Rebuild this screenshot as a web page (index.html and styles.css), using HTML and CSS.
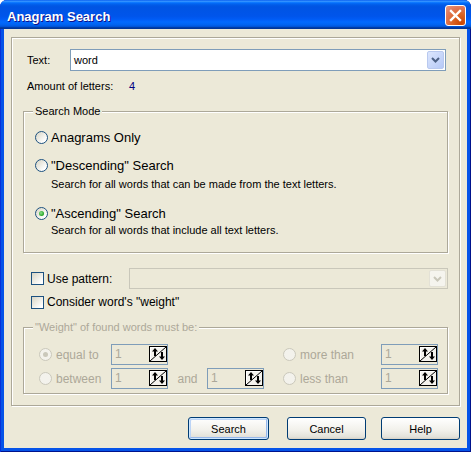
FILE: index.html
```html
<!DOCTYPE html>
<html lang="en">
<head>
  <meta charset="UTF-8">
  <title>Anagram Search</title>
  <link rel="stylesheet" href="styles.css">
</head>
<body>
  <div class="window">
    <div class="titlebar">
      <span class="title">Anagram Search</span>
      <span class="close">
        <svg width="19" height="19" viewBox="0 0 19 19"><path d="M5 5 L14 14 M14 5 L5 14" stroke="#fff" stroke-width="2.4" stroke-linecap="square"/></svg>
      </span>
    </div>

    <div class="client">
      <div class="panel">
        <div class="text-row">
          <span class="text-label">Text:</span>
          <div class="combo">
            <span class="combo-value">word</span>
            <span class="drop">
              <svg width="9" height="6" viewBox="0 0 9 6"><path d="M1 1 L4.5 4.5 L8 1" fill="none" stroke="#4d6185" stroke-width="2"/></svg>
            </span>
          </div>
        </div>

        <div class="amount-row">
          <span class="amount-label">Amount of letters:</span>
          <span class="amount">4</span>
        </div>

        <fieldset class="group mode">
          <legend>Search Mode</legend>
          <div class="option"><span class="radio"></span>Anagrams Only</div>
          <div class="option second"><span class="radio"></span>"Descending" Search</div>
          <div class="hint">Search for all words that can be made from the text letters.</div>
          <div class="option third"><span class="radio checked"></span>"Ascending" Search</div>
          <div class="hint last">Search for all words that include all text letters.</div>
        </fieldset>

        <div class="check-row pattern">
          <span class="check"></span>
          <span class="check-label">Use pattern:</span>
          <div class="combo off">
            <span class="combo-value"></span>
            <span class="drop">
              <svg width="9" height="6" viewBox="0 0 9 6"><path d="M1 1 L4.5 4.5 L8 1" fill="none" stroke="#c9c7ba" stroke-width="2"/></svg>
            </span>
          </div>
        </div>

        <div class="check-row weight-check">
          <span class="check"></span>
          <span class="check-label">Consider word's "weight"</span>
        </div>

        <fieldset class="group weight">
          <legend>"Weight" of found words must be:</legend>
          <div class="weight-grid">
            <div class="w-option"><span class="radio off checked"></span>equal to</div>
            <div class="spin"><span class="spin-value">1</span><svg class="spin-btn" width="18" height="16" viewBox="0 0 18 16"><rect x="0.5" y="0.5" width="17" height="15" fill="#f4f3ee" stroke="#000"/><path d="M1.5 14.5 V1.5 H16.5" fill="none" stroke="#fff"/><path d="M1 15 L17 1" stroke="#000"/><path d="M6 5 V10 M13 6 V11" stroke="#000" stroke-width="2"/><path d="M3 5.5 L6 2 L9 5.5 Z M10 10.5 L13 14 L16 10.5 Z" fill="#000"/></svg></div>
            <span></span>
            <span></span>
            <span></span>
            <div class="w-option"><span class="radio off"></span>more than</div>
            <div class="spin"><span class="spin-value">1</span><svg class="spin-btn" width="18" height="16" viewBox="0 0 18 16"><rect x="0.5" y="0.5" width="17" height="15" fill="#f4f3ee" stroke="#000"/><path d="M1.5 14.5 V1.5 H16.5" fill="none" stroke="#fff"/><path d="M1 15 L17 1" stroke="#000"/><path d="M6 5 V10 M13 6 V11" stroke="#000" stroke-width="2"/><path d="M3 5.5 L6 2 L9 5.5 Z M10 10.5 L13 14 L16 10.5 Z" fill="#000"/></svg></div>

            <div class="w-option"><span class="radio off"></span>between</div>
            <div class="spin"><span class="spin-value">1</span><svg class="spin-btn" width="18" height="16" viewBox="0 0 18 16"><rect x="0.5" y="0.5" width="17" height="15" fill="#f4f3ee" stroke="#000"/><path d="M1.5 14.5 V1.5 H16.5" fill="none" stroke="#fff"/><path d="M1 15 L17 1" stroke="#000"/><path d="M6 5 V10 M13 6 V11" stroke="#000" stroke-width="2"/><path d="M3 5.5 L6 2 L9 5.5 Z M10 10.5 L13 14 L16 10.5 Z" fill="#000"/></svg></div>
            <span class="and">and</span>
            <div class="spin"><span class="spin-value">1</span><svg class="spin-btn" width="18" height="16" viewBox="0 0 18 16"><rect x="0.5" y="0.5" width="17" height="15" fill="#f4f3ee" stroke="#000"/><path d="M1.5 14.5 V1.5 H16.5" fill="none" stroke="#fff"/><path d="M1 15 L17 1" stroke="#000"/><path d="M6 5 V10 M13 6 V11" stroke="#000" stroke-width="2"/><path d="M3 5.5 L6 2 L9 5.5 Z M10 10.5 L13 14 L16 10.5 Z" fill="#000"/></svg></div>
            <span></span>
            <div class="w-option"><span class="radio off"></span>less than</div>
            <div class="spin"><span class="spin-value">1</span><svg class="spin-btn" width="18" height="16" viewBox="0 0 18 16"><rect x="0.5" y="0.5" width="17" height="15" fill="#f4f3ee" stroke="#000"/><path d="M1.5 14.5 V1.5 H16.5" fill="none" stroke="#fff"/><path d="M1 15 L17 1" stroke="#000"/><path d="M6 5 V10 M13 6 V11" stroke="#000" stroke-width="2"/><path d="M3 5.5 L6 2 L9 5.5 Z M10 10.5 L13 14 L16 10.5 Z" fill="#000"/></svg></div>
          </div>
        </fieldset>
      </div>

      <div class="buttons">
        <button class="btn default">Search</button>
        <button class="btn">Cancel</button>
        <button class="btn">Help</button>
      </div>
    </div>
  </div>
</body>
</html>
```

FILE: styles.css
```css
body {
  margin: 0;
  background: #fff;
  font-family: "Liberation Sans", Arial, sans-serif;
  font-size: 11px;
  color: #000;
}
.window {
  width: 471px;
  height: 452px;
  box-sizing: border-box;
  padding: 0 4px 4px;
  background: #0553e8;
  border-radius: 7px 7px 0 0;
  box-shadow: inset 1px 0 #0831d9, inset -1px 0 #00138c, inset 0 -1px #00138c;
  display: flex;
  flex-direction: column;
}
.titlebar {
  height: 29px;
  margin: 0 -4px;
  padding: 3px 5px 0 7px;
  box-sizing: border-box;
  display: flex;
  align-items: center;
  border-radius: 7px 7px 0 0;
  background: linear-gradient(#0058ee 0%, #3a93ff 4%, #288eff 6%, #127dff 8%, #036ffc 10%, #0262ee 14%, #0057e5 20%, #0054e3 24%, #0055eb 56%, #005bf5 66%, #026afe 76%, #0062ef 86%, #0052d6 92%, #0040ab 94%, #003092 100%);
}
.title {
  flex: 1;
  color: #fff;
  font-weight: bold;
  font-size: 13px;
  text-shadow: 1px 1px #0f1089;
}
.close {
  align-self: flex-start;
  margin-top: 2px;
  width: 21px;
  height: 21px;
  box-sizing: border-box;
  border: 1px solid #fff;
  border-radius: 3px;
  background: radial-gradient(circle at 80% 90%, #cc4600 0%, #dc6527 40%, #e0785a 70%, #e59a83 100%);
  display: flex;
  align-items: center;
  justify-content: center;
}
.close svg {
  display: block;
}
.client {
  flex: 1;
  background: #ece9d8;
  padding: 8px 7px 0;
}
.panel {
  height: 369px;
  box-sizing: border-box;
  border: 1px solid #aca899;
  box-shadow: inset 1px 1px #fff, 1px 1px #fff;
  padding: 11px 11px 0;
}
.text-row {
  display: flex;
  align-items: center;
  padding-left: 4px;
}
.text-label {
  width: 43px;
}
.combo {
  width: 376px;
  height: 22px;
  box-sizing: border-box;
  border: 1px solid #7f9db9;
  background: #fff;
  display: flex;
  align-items: center;
  padding: 1px;
}
.combo-value {
  flex: 1;
  padding-left: 2px;
}
.drop {
  width: 17px;
  height: 18px;
  box-sizing: border-box;
  border: 1px solid #b9c9ef;
  border-radius: 2px;
  background: linear-gradient(135deg, #dce6fd, #b6c9f7);
  display: flex;
  align-items: center;
  justify-content: center;
}
.amount-row {
  margin-top: 8px;
  padding-left: 4px;
  line-height: 14px;
  display: flex;
}
.amount-label {
  width: 102px;
}
.amount {
  color: #000080;
}
.group {
  margin: 0;
  border: 1px solid #aca899;
  box-shadow: inset 1px 1px #fff, 1px 1px #fff;
  padding: 10px 9px 15px;
  min-inline-size: 0;
}
.group legend {
  padding: 0 2px;
  line-height: 13px;
  background: #ece9d8;
}
.mode {
  margin-top: 12px;
}
.option {
  display: flex;
  align-items: center;
  height: 18px;
  margin-left: 2px;
  font-size: 13px;
}
.option .radio {
  margin-right: 3px;
}
.option.second {
  margin-top: 10px;
}
.option.third {
  margin-top: 13px;
}
.hint {
  margin: 3px 0 0 18px;
  line-height: 14px;
}
.hint.last {
  margin-top: 1px;
}
.radio {
  display: inline-block;
  position: relative;
  width: 13px;
  height: 13px;
  box-sizing: border-box;
  border: 1px solid #1c5180;
  border-radius: 50%;
  background: linear-gradient(135deg, #d8d5c4, #fff 80%);
  flex: none;
}
.radio.checked::after {
  content: "";
  position: absolute;
  left: 3px;
  top: 3px;
  width: 5px;
  height: 5px;
  border-radius: 50%;
  background: radial-gradient(circle at 40% 40%, #8de08d, #21a121 70%);
}
.radio.off {
  border-color: #cac8bb;
  background: #f3f2ec;
}
.radio.off.checked::after {
  background: #cac8bb;
}
.check-row {
  display: flex;
  align-items: center;
  padding-left: 8px;
}
.check {
  width: 13px;
  height: 13px;
  box-sizing: border-box;
  border: 1px solid #1c5180;
  background: linear-gradient(135deg, #d8d5c4, #fff 85%);
  margin-right: 3px;
  flex: none;
}
.check-label {
  font-size: 12px;
}
.pattern {
  margin-top: 15px;
  height: 21px;
}
.pattern .check-label {
  width: 82px;
}
.combo.off {
  width: 319px;
  height: 21px;
  border-color: #c9c7ba;
  background: #ece9d8;
}
.combo.off .drop {
  border-color: #e3e1d6;
  background: #f5f4ee;
  height: 17px;
}
.weight-check {
  margin-top: 6px;
  height: 14px;
}
.weight {
  margin-top: 12px;
  padding-bottom: 4px;
  color: #aca899;
}
.weight-grid {
  display: grid;
  grid-template-columns: 72px 57px 39px 57px 19px 98px 57px;
  grid-auto-rows: 21px;
  row-gap: 3px;
  margin-left: 6px;
  font-size: 12px;
  align-items: center;
}
.w-option {
  display: flex;
  align-items: center;
}
.w-option .radio {
  margin-right: 4px;
}
.and {
  text-align: center;
}
.spin {
  height: 21px;
  box-sizing: border-box;
  border: 1px solid #7f9db9;
  display: flex;
  align-items: flex-start;
  padding: 1px 0 0 3px;
}
.spin-value {
  flex: 1;
  line-height: 17px;
}
.spin-btn {
  display: block;
}
.buttons {
  display: flex;
  justify-content: flex-end;
  gap: 15px;
  margin-top: 11px;
}
.btn {
  width: 79px;
  height: 23px;
  border: 1px solid #003c74;
  border-radius: 3px;
  background: linear-gradient(#fff, #f1f0ea 60%, #e3e2da 90%, #d6d0c5);
  font-family: "Liberation Sans", Arial, sans-serif;
  font-size: 11px;
  color: #000;
  padding: 0;
}
.btn.default {
  width: 81px;
  margin-right: 3px;
  box-shadow: inset 0 0 0 1px #cee7ff, inset -1px -1px 0 1px #98b8ea, inset 1px 1px 0 1px #bcd4f6;
}
```
